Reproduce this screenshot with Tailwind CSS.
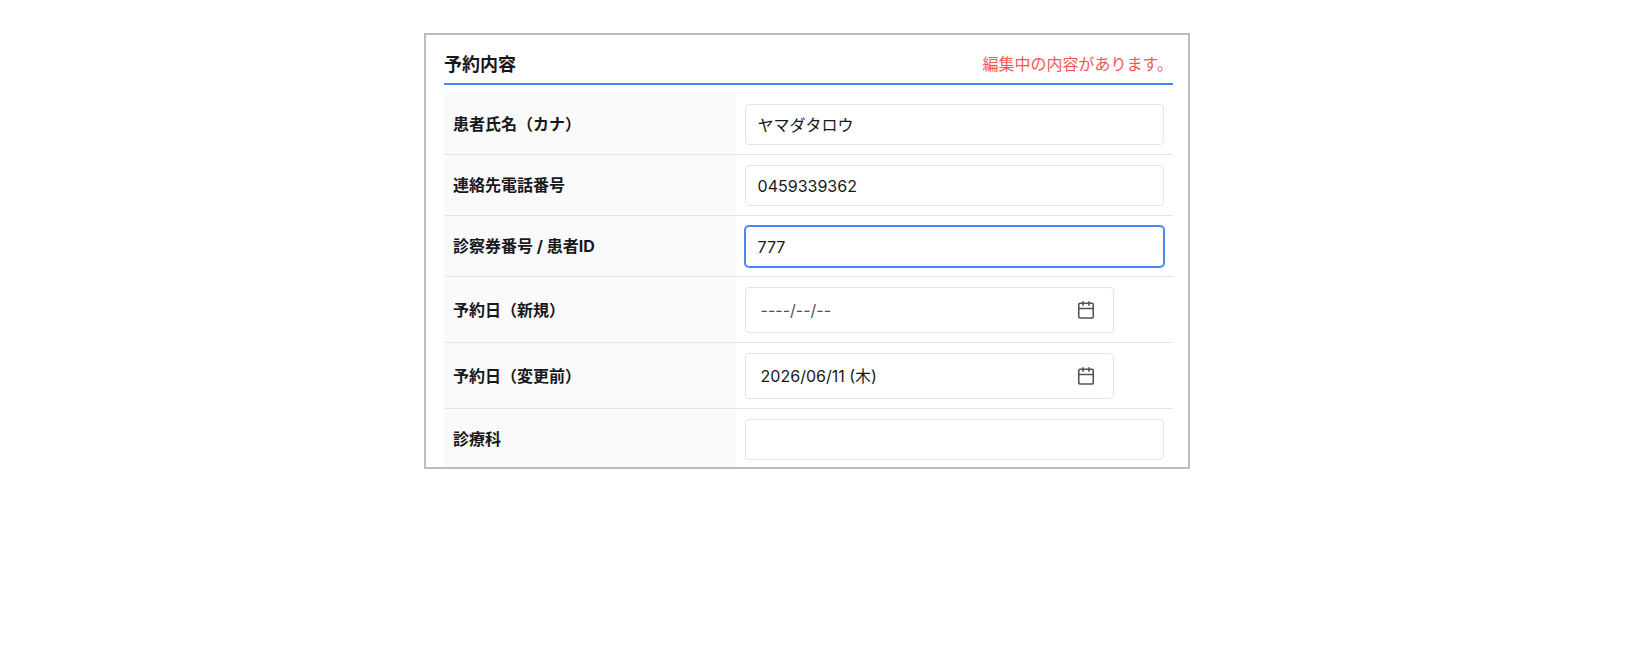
<!DOCTYPE html>
<html lang="ja">
<head>
    <meta charset="UTF-8">
    <meta name="viewport" content="width=device-width, initial-scale=1.0">
    <title>予約内容</title>
    <script src="https://cdn.jsdelivr.net/npm/@tailwindcss/browser@4"></script>
</head>
<body class="bg-white text-[#18181b] font-[Inter,'Noto_Sans_CJK_JP',sans-serif] flex justify-center pt-[33px] pr-6">

    <form class="w-full max-w-[766px] pl-[18px] pr-[15px] pt-4 bg-white border-2 border-[#bcbcbc]">
        <div class="flex items-center justify-between pb-1 mb-[9px] border-b-2 border-[#4589f8]">
            <h2 class="text-lg leading-7 font-bold">予約内容</h2>
            <p class="text-base leading-6 pb-0.5 text-[#f65656]">編集中の内容があります。</p>
        </div>

        <table class="w-full table-fixed border-separate border-spacing-0">
            <tbody>
                <tr>
                    <th scope="row" class="w-2/5 px-[9px] bg-[#fafafa] border-b border-[#e4e4e7] text-left font-bold">
                        <label for="kana">患者氏名（カナ）</label>
                    </th>
                    <td class="px-[9px] pt-[10px] pb-[9px] border-b border-[#e4e4e7]">
                        <input type="text" id="kana" name="kana" value="ヤマダタロウ"
                            class="block w-full h-[41px] px-3 pb-0.5 border border-[#e4e4e7] rounded bg-white focus:outline-none">
                    </td>
                </tr>
                <tr>
                    <th scope="row" class="px-[9px] bg-[#fafafa] border-b border-[#e4e4e7] text-left font-bold">
                        <label for="phone">連絡先電話番号</label>
                    </th>
                    <td class="px-[9px] pt-[10px] pb-[9px] border-b border-[#e4e4e7]">
                        <input type="text" id="phone" name="phone" value="0459339362"
                            class="block w-full h-[41px] px-3 border border-[#e4e4e7] rounded bg-white focus:outline-none">
                    </td>
                </tr>
                <tr>
                    <th scope="row" class="px-[9px] bg-[#fafafa] border-b border-[#e4e4e7] text-left font-bold">
                        <label for="patient_id">診察券番号 / 患者ID</label>
                    </th>
                    <td class="px-[9px] pt-[10px] pb-[9px] border-b border-[#e4e4e7]">
                        <input type="text" id="patient_id" name="patient_id" value="777"
                            class="block w-full h-[41px] px-3 border border-[#4589f8] ring-1 ring-[#4589f8] rounded bg-white focus:outline-none">
                    </td>
                </tr>
                <tr>
                    <th scope="row" class="px-[9px] bg-[#fafafa] border-b border-[#e4e4e7] text-left font-bold">
                        <label for="date_new">予約日（新規）</label>
                    </th>
                    <td class="px-[9px] pt-[10px] pb-[9px] border-b border-[#e4e4e7]">
                        <div class="flex items-center w-[88%] h-[46px] pl-[15px] pr-[18px] border border-[#e4e4e7] rounded bg-white">
                            <input type="text" id="date_new" name="date_new" placeholder="----/--/--"
                                class="flex-1 min-w-0 placeholder:text-[#52525b] focus:outline-none">
                            <button type="button" aria-label="予約日（新規）を選択" class="text-[#52525b] cursor-pointer">
                                <svg class="block size-[18px]" viewBox="0 0 18 18" fill="none" stroke="currentColor" stroke-width="1.6" stroke-linecap="round" stroke-linejoin="round">
                                    <rect x="1.75" y="2.25" width="14.5" height="14.75" rx="1.2"/>
                                    <path d="M1.75 7.5h14.5M6 .9v3.4M12 .9v3.4"/>
                                </svg>
                            </button>
                        </div>
                    </td>
                </tr>
                <tr>
                    <th scope="row" class="px-[9px] bg-[#fafafa] border-b border-[#e4e4e7] text-left font-bold">
                        <label for="date_prev">予約日（変更前）</label>
                    </th>
                    <td class="px-[9px] pt-[10px] pb-[9px] border-b border-[#e4e4e7]">
                        <div class="flex items-center w-[88%] h-[46px] pl-[15px] pr-[18px] border border-[#e4e4e7] rounded bg-white">
                            <input type="text" id="date_prev" name="date_prev" value="2026/06/11 (木)"
                                class="flex-1 min-w-0 focus:outline-none">
                            <button type="button" aria-label="予約日（変更前）を選択" class="text-[#52525b] cursor-pointer">
                                <svg class="block size-[18px]" viewBox="0 0 18 18" fill="none" stroke="currentColor" stroke-width="1.6" stroke-linecap="round" stroke-linejoin="round">
                                    <rect x="1.75" y="2.25" width="14.5" height="14.75" rx="1.2"/>
                                    <path d="M1.75 7.5h14.5M6 .9v3.4M12 .9v3.4"/>
                                </svg>
                            </button>
                        </div>
                    </td>
                </tr>
                <tr>
                    <th scope="row" class="px-[9px] pt-0.5 bg-[#fafafa] text-left font-bold">
                        <label for="department">診療科</label>
                    </th>
                    <td class="px-[9px] pt-[10px] pb-[7px]">
                        <input type="text" id="department" name="department"
                            class="block w-full h-[41px] px-3 border border-[#e4e4e7] rounded bg-white focus:outline-none">
                    </td>
                </tr>
            </tbody>
        </table>
    </form>

</body>
</html>
